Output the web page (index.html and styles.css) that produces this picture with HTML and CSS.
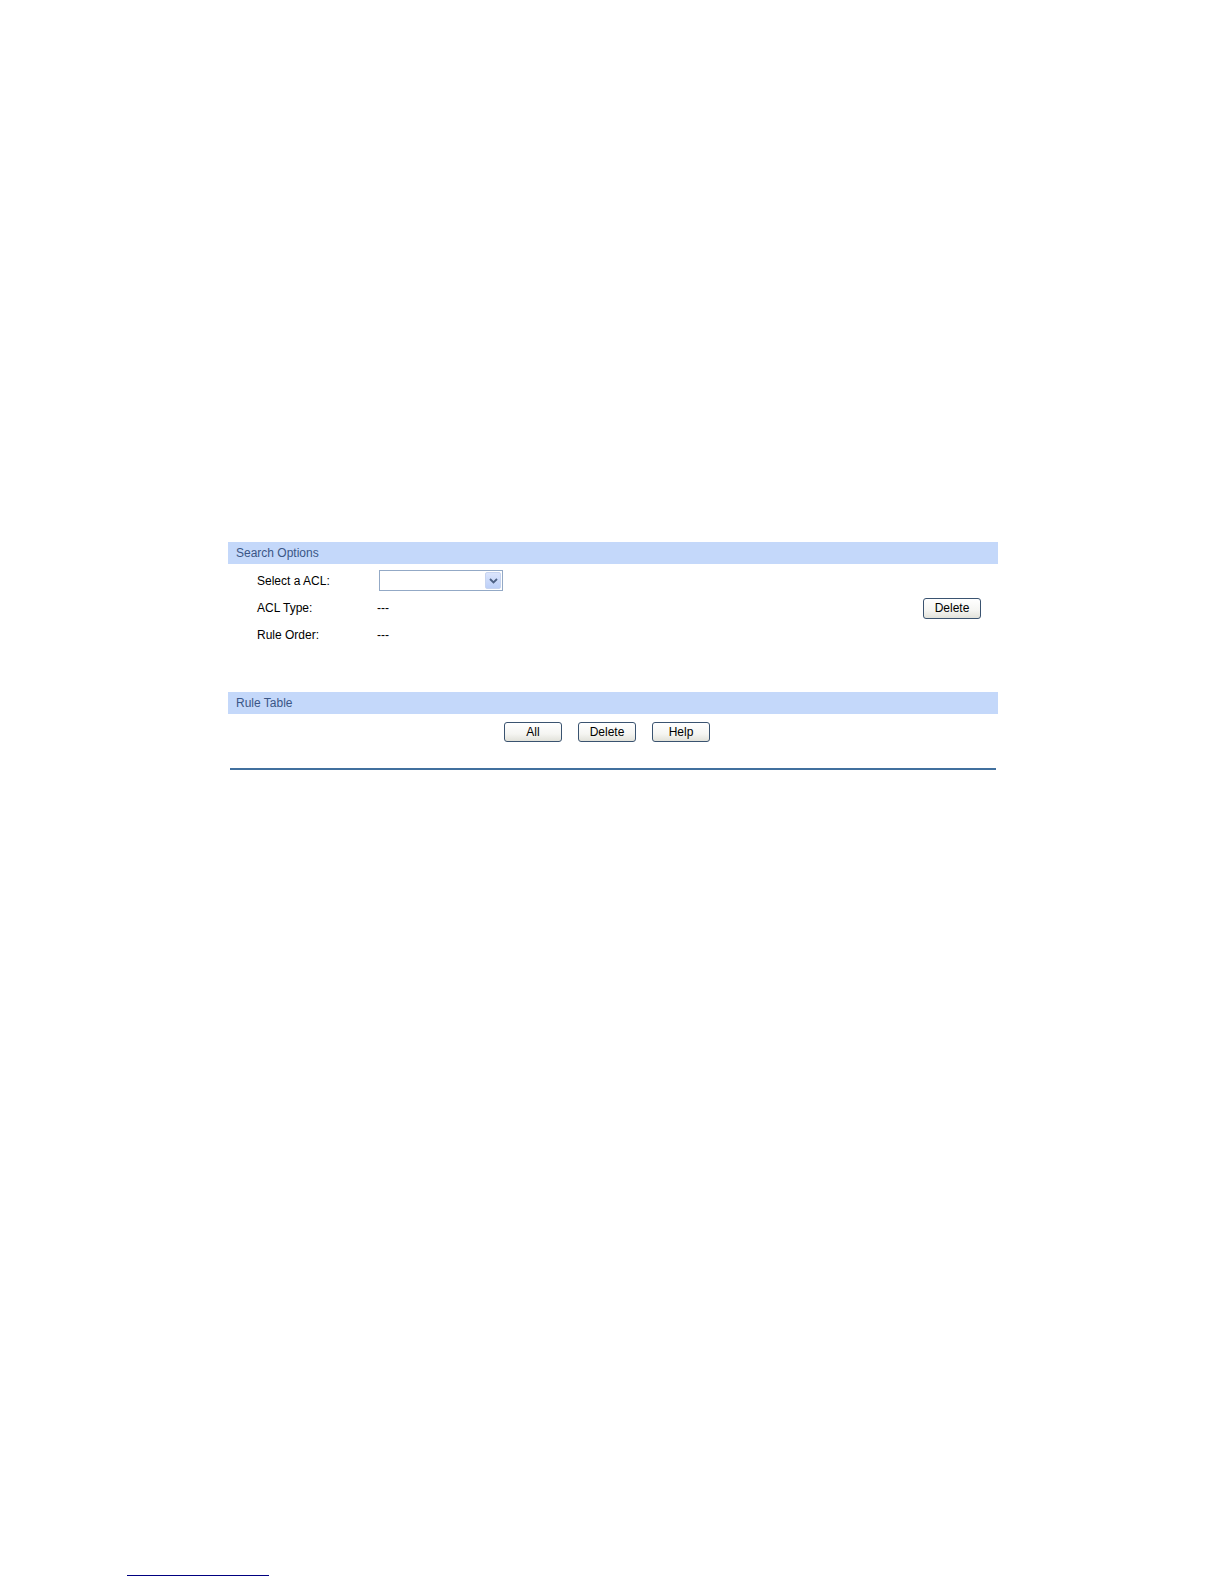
FILE: index.html
```html
<!DOCTYPE html>
<html lang="en">
<head>
<meta charset="utf-8">
<title>ACL Rule Table</title>
<link rel="stylesheet" href="styles.css">
</head>
<body>
<div class="panel">
  <div class="section-head">Search Options</div>
  <div class="search-body">
    <div class="row row-select">
      <span class="label">Select a ACL:</span>
      <div class="select-box">
        <span class="select-value"></span>
        <span class="select-arrow">
          <svg width="9" height="6" viewBox="0 0 9 6"><path d="M1 1 L4.5 4.5 L8 1" fill="none" stroke="#4d6185" stroke-width="1.8"/></svg>
        </span>
      </div>
      <span class="action"></span>
    </div>
    <div class="row row-type">
      <span class="label">ACL Type:</span>
      <span class="value">---</span>
      <span class="action"><button class="btn" type="button">Delete</button></span>
    </div>
    <div class="row row-order">
      <span class="label">Rule Order:</span>
      <span class="value">---</span>
      <span class="action"></span>
    </div>
  </div>
  <div class="section-head">Rule Table</div>
  <div class="table-body">
    <div class="btn-row">
      <button class="btn" type="button">All</button>
      <button class="btn" type="button">Delete</button>
      <button class="btn" type="button">Help</button>
    </div>
    <div class="bottom-rule"></div>
  </div>
</div>
<div class="footnote-rule"></div>
</body>
</html>
```

FILE: styles.css
```css
html, body {
  margin: 0;
  padding: 0;
  background: #ffffff;
}

body {
  font-family: "Liberation Sans", Arial, sans-serif;
  font-size: 12px;
  color: #000000;
  padding-top: 542px;
}

.panel {
  margin-left: 228px;
  width: 770px;
}

.section-head {
  height: 22px;
  line-height: 22px;
  padding-left: 8px;
  background: #c4d8fa;
  color: #3b5686;
  font-size: 12px;
}

.search-body {
  height: 128px;
  padding-top: 6px;
  box-sizing: border-box;
}

.row {
  display: grid;
  grid-template-columns: 120px 124px 1fr;
  align-items: center;
  padding-left: 29px;
  padding-right: 17px;
}

.row-select {
  height: 21px;
}

.row-type {
  height: 22px;
  margin-top: 6px;
}

.row-order {
  height: 22px;
  margin-top: 5px;
}

.label {
  white-space: nowrap;
}

.value {
  white-space: nowrap;
}

.action {
  justify-self: end;
  display: flex;
}

.select-box {
  margin-left: 2px;
  width: 124px;
  height: 21px;
  box-sizing: border-box;
  border: 1px solid #93a9c6;
  background: #ffffff;
  display: flex;
  justify-content: space-between;
  align-items: stretch;
  padding: 1px;
}

.select-value {
  flex: 1;
}

.select-arrow {
  width: 16px;
  box-sizing: border-box;
  border: 1px solid #c7d4f0;
  border-radius: 2px;
  background: linear-gradient(#dbe5fc, #bccff8);
  display: flex;
  align-items: center;
  justify-content: center;
}

.btn {
  width: 58px;
  height: 21px;
  margin: 0;
  padding: 0;
  box-sizing: border-box;
  border: 1px solid #3a5370;
  border-radius: 3px;
  background: linear-gradient(#ffffff 0%, #f5f5f2 60%, #e2e2da 100%);
  font-family: "Liberation Sans", Arial, sans-serif;
  font-size: 12px;
  color: #000000;
  line-height: 19px;
}

.table-body {
  padding-top: 8px;
}

.btn-row {
  display: flex;
  justify-content: center;
  gap: 16px;
  padding-right: 12px;
}

.btn-row .btn {
  height: 20px;
  line-height: 18px;
}

.bottom-rule {
  margin: 26px 2px 0 2px;
  border-top: 2px solid #41709e;
}

.footnote-rule {
  margin-top: 805px;
  margin-left: 127px;
  width: 142px;
  border-top: 1px solid #000080;
}
```
